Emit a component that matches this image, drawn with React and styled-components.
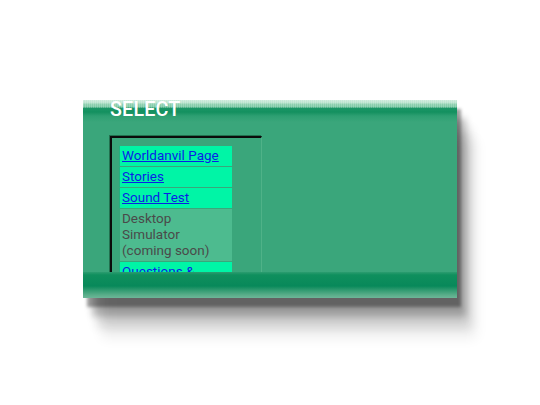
import React from 'react'
import styled, { createGlobalStyle } from 'styled-components'

const GlobalStyle = createGlobalStyle`
  body {
    margin: 0;
    background: #fff;
    font-family: Roboto, "Liberation Sans", sans-serif;
  }
`

const Page = styled.div`
  display: flex;
  align-items: flex-start;
  padding: 100px 0 0 83px;
  height: 405px;
  box-sizing: border-box;
`

const Window = styled.div`
  width: 374px;
  height: 198px;
  display: flex;
  flex-direction: column;
  background: #3aa67b;
  box-shadow:
    4px 9px 3px rgba(0, 0, 0, 0.36),
    9px 18px 7px rgba(0, 0, 0, 0.24),
    14px 29px 10px rgba(0, 0, 0, 0.14),
    19px 40px 12px rgba(0, 0, 0, 0.07);
`

const TitleBar = styled.div`
  height: 22px;
  flex: none;
  padding-left: 27px;
  color: #fff;
  font-size: 19.7px;
  font-weight: 500;
  line-height: 20px;
  letter-spacing: 0.2px;
  background:
    repeating-linear-gradient(90deg, rgba(255,255,255,0.18) 0 1px, transparent 1px 2px) top / 100% 8px no-repeat,
    linear-gradient(#cdebdc 0, #b8e2cd 3px, #8fd1b1 4px, #7cc8a5 7px, #1c9667 8px, #13905f 12px, #2d9f72 16px, #3aa67b 22px);
`

const Body = styled.div`
  flex: 1;
  overflow: hidden;
  padding: 14px 0 0 27px;
`

const Frame = styled.div`
  box-sizing: border-box;
  width: 152px;
  padding: 8px 8px 8px 7px;
  border-top: 2px solid #0b0b0b;
  border-left: 2px solid #0b0b0b;
  border-right: 1px solid #4fb288;
  box-shadow: -1px -1px 0 #22704f;
`

const Menu = styled.ul`
  list-style: none;
  margin: 0;
  padding: 0;
  width: 113px;
  display: flex;
  flex-direction: column;
  gap: 1px;
`

const Item = styled.li`
  padding: 1px 3px 3px 2px;
  border-left: 1px solid ${p => (p.$disabled ? '#3aa67b' : '#22b27f')};
  background: ${p => (p.$disabled ? '#4dbb8f' : '#00f5a6')};
  color: #4a4a4a;
  font-size: 13.5px;
  line-height: 16px;

  a {
    color: #0a1ee6;
    text-decoration: underline;
  }
`

const Footer = styled.div`
  height: 26px;
  flex: none;
  background: linear-gradient(#2c9d70 0, #0f8f5d 3px, #08895a 14px, #2f9a70 18px, #5aae8a 23px, #6cb698 26px);
`

const links = [
  { label: 'Worldanvil Page' },
  { label: 'Stories' },
  { label: 'Sound Test' },
  { label: 'Desktop Simulator (coming soon)', disabled: true },
  { label: 'Questions & Answers' },
  { label: 'Credits' },
]

export default function App() {
  return (
    <>
      <GlobalStyle />
      <Page>
        <Window>
          <TitleBar>SELECT</TitleBar>
          <Body>
            <Frame>
              <Menu>
                {links.map(l => (
                  <Item key={l.label} $disabled={l.disabled}>
                    {l.disabled ? l.label : <a href="#">{l.label}</a>}
                  </Item>
                ))}
              </Menu>
            </Frame>
          </Body>
          <Footer />
        </Window>
      </Page>
    </>
  )
}
